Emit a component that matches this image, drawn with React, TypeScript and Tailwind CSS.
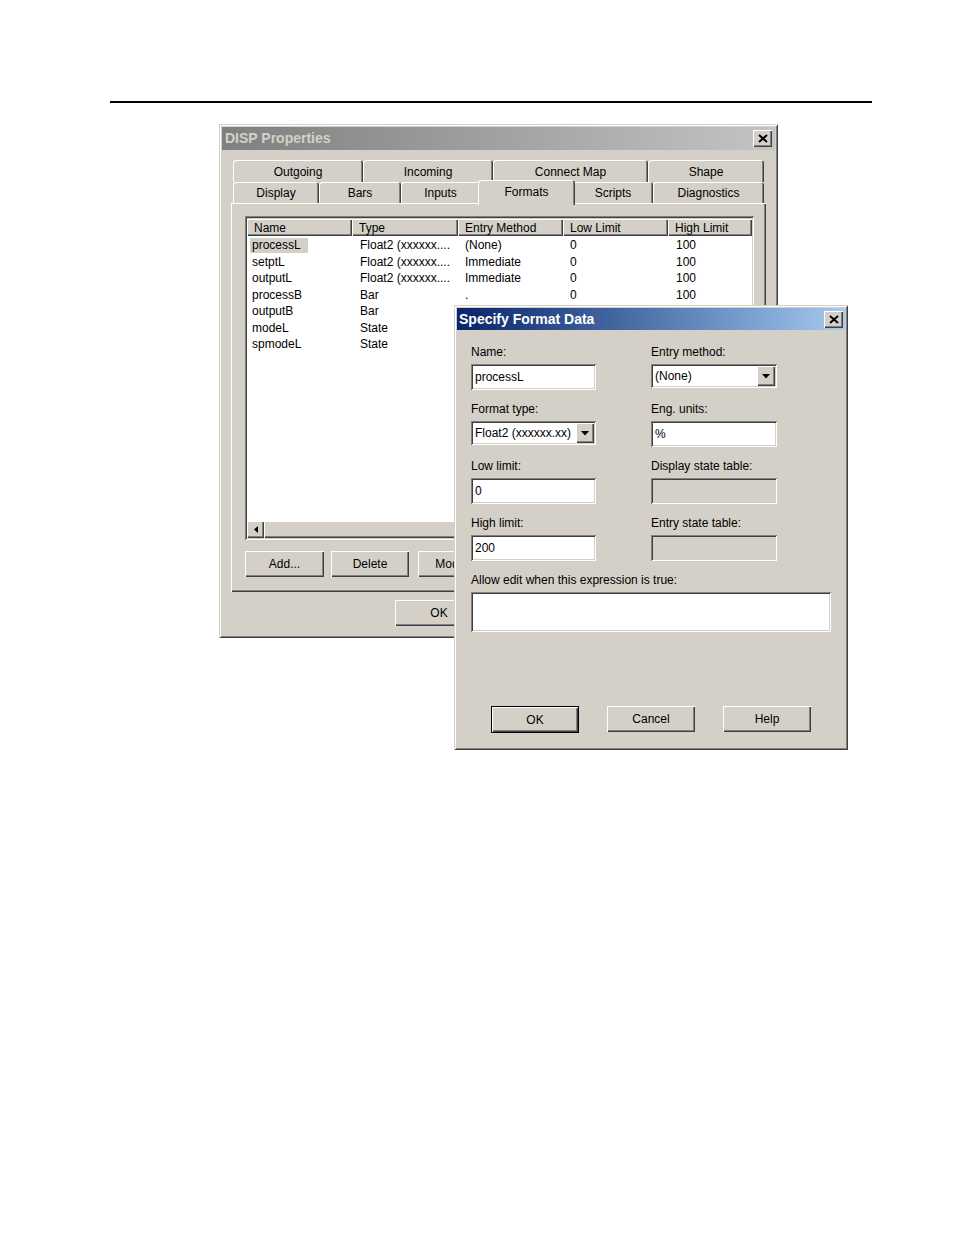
import React from 'react';

// 3D borders, Windows 2000 style
const raised =
  'shadow-[inset_1px_1px_0_#ffffff,inset_-1px_-1px_0_#404040,inset_-2px_-2px_0_#808080]';
const frame =
  'shadow-[inset_1px_1px_0_#d4d0c8,inset_-1px_-1px_0_#404040,inset_2px_2px_0_#ffffff,inset_-2px_-2px_0_#808080]';
const sunken =
  'shadow-[inset_1px_1px_0_#808080,inset_-1px_-1px_0_#ffffff,inset_2px_2px_0_#404040,inset_-2px_-2px_0_#d4d0c8]';
const tabEdge = 'shadow-[inset_1px_1px_0_#ffffff,inset_-1px_0_0_#404040,inset_-2px_0_0_#808080]';

type Tab = { label: string; w: string; selected?: boolean };

const tabsTop: Tab[] = [
  { label: 'Outgoing', w: 'w-[130px]' },
  { label: 'Incoming', w: 'w-[130px]' },
  { label: 'Connect Map', w: 'w-[155px]' },
  { label: 'Shape', w: 'w-[116px]' },
];

const tabsBottom: Tab[] = [
  { label: 'Display', w: 'w-[86px]' },
  { label: 'Bars', w: 'w-[82px]' },
  { label: 'Inputs', w: 'w-[79px]' },
  { label: 'Formats', w: 'w-[97px]', selected: true },
  { label: 'Scripts', w: 'w-[80px]' },
  { label: 'Diagnostics', w: 'w-[111px]' },
];

const columnas = [
  { titulo: 'Name', w: 'w-[105px]' },
  { titulo: 'Type', w: 'w-[106px]' },
  { titulo: 'Entry Method', w: 'w-[105px]' },
  { titulo: 'Low Limit', w: 'w-[105px]' },
  { titulo: 'High Limit', w: 'flex-1' },
];

// las filas de abajo quedan tapadas por el diálogo delantero
const filas = [
  ['processL', 'Float2 (xxxxxx....', '(None)', '0', '100'],
  ['setptL', 'Float2 (xxxxxx....', 'Immediate', '0', '100'],
  ['outputL', 'Float2 (xxxxxx....', 'Immediate', '0', '100'],
  ['processB', 'Bar', '.', '0', '100'],
  ['outputB', 'Bar', '', '', ''],
  ['modeL', 'State', '', '', ''],
  ['spmodeL', 'State', '', '', ''],
];

function CloseButton() {
  return (
    <div className={`w-[19px] h-[17px] bg-[#d4d0c8] flex items-center justify-center ${raised}`}>
      <svg width="10" height="9" viewBox="0 0 10 9">
        <path d="M1 1 L9 8 M9 1 L1 8" stroke="#000" strokeWidth="1.9" fill="none" />
      </svg>
    </div>
  );
}

function Button({ label, w, def }: { label: string; w: string; def?: boolean }) {
  if (def) {
    return (
      <div className={`${w} h-[27px] border border-black bg-[#d4d0c8]`}>
        <div className={`h-full flex items-center justify-center ${raised}`}>{label}</div>
      </div>
    );
  }
  return (
    <div className={`${w} h-[26px] bg-[#d4d0c8] flex items-center justify-center whitespace-nowrap overflow-hidden ${raised}`}>
      {label}
    </div>
  );
}

function DropArrow() {
  return (
    <div className={`absolute right-[2px] top-[2px] bottom-[2px] w-[18px] bg-[#d4d0c8] flex items-center justify-center ${raised}`}>
      <svg width="8" height="5" viewBox="0 0 8 5">
        <path d="M0 0 H8 L4 4.5 Z" fill="#000" />
      </svg>
    </div>
  );
}

function BackWindow() {
  return (
    <div className={`absolute left-[1px] top-0 w-[559px] h-[514px] bg-[#d4d0c8] p-[3px] flex flex-col ${frame}`}>
      {/* barra de título inactiva */}
      <div className="h-[23px] bg-linear-to-r from-[#808080] to-[#c4c4c4] flex items-center justify-between pl-[3px] pr-[3px]">
        <span className="font-bold text-[14px] text-[#d4d0c8]">DISP Properties</span>
        <CloseButton />
      </div>

      {/* pestañas */}
      <div className="mt-[10px] ml-[11px] flex h-[22px]">
        {tabsTop.map((t) => (
          <div key={t.label} className={`${t.w} h-[22px] pt-[2px] rounded-t-[3px] bg-[#d4d0c8] flex items-center justify-center ${tabEdge}`}>
            {t.label}
          </div>
        ))}
      </div>
      <div className="ml-[11px] flex items-end h-[21px]">
        {tabsBottom.map((t) =>
          t.selected ? (
            <div
              key={t.label}
              className={`${t.w} -mx-[2px] h-[25px] -mb-[2px] relative z-10 rounded-t-[3px] bg-[#d4d0c8] flex justify-center pt-[5px] leading-[14px] shadow-[inset_1px_1px_0_#ffffff,inset_-1px_0_0_#404040,inset_-2px_0_0_#808080]`}
            >
              {t.label}
            </div>
          ) : (
            <div key={t.label} className={`${t.w} h-[21px] pt-[1px] rounded-t-[3px] bg-[#d4d0c8] flex items-center justify-center ${tabEdge}`}>
              {t.label}
            </div>
          )
        )}
      </div>

      {/* panel */}
      <div className={`ml-[9px] w-[535px] h-[389px] pl-[14px] pt-[13px] ${raised}`}>
        <div className={`w-[509px] h-[324px] bg-white p-[2px] flex flex-col ${sunken}`}>
          <div className="h-[18px] pt-[1px] flex bg-[#d4d0c8]">
            {columnas.map((c) => (
              <div key={c.titulo} className={`${c.w} h-full pl-[7px] flex items-center whitespace-nowrap ${raised}`}>
                {c.titulo}
              </div>
            ))}
          </div>
          <div className="flex-1 pt-[1px] overflow-hidden">
            {filas.map((f, i) => (
              <div key={f[0]} className="h-[16.5px] flex items-center whitespace-nowrap">
                <div className="w-[105px] pl-[3px]">
                  <span className={`inline-block px-[2px] leading-[15px] w-[58px] ${i === 0 ? 'bg-[#d4d0c8]' : ''}`}>{f[0]}</span>
                </div>
                <div className="w-[106px] pl-[8px] overflow-hidden">{f[1]}</div>
                <div className="w-[105px] pl-[7px]">{f[2]}</div>
                <div className="w-[105px] pl-[7px]">{f[3]}</div>
                <div className="flex-1 pl-[8px]">{f[4]}</div>
              </div>
            ))}
          </div>
          {/* barra de desplazamiento */}
          <div className="h-[17px] flex bg-[#e8e6e2]">
            <div className={`w-[17px] h-full bg-[#d4d0c8] flex items-center justify-center ${raised}`}>
              <svg width="4" height="7" viewBox="0 0 4 7">
                <path d="M4 0 V7 L0 3.5 Z" fill="#000" />
              </svg>
            </div>
            <div className={`flex-1 h-full bg-[#d4d0c8] ${raised}`} />
          </div>
        </div>

        <div className="mt-[11px] flex">
          <Button label="Add..." w="w-[79px]" />
          <div className="ml-[7px]">
            <Button label="Delete" w="w-[78px]" />
          </div>
          <div className="ml-[9px]">
            <Button label="Modify..." w="w-[79px]" />
          </div>
        </div>
      </div>

      <div className="mt-[8px] ml-[173px]">
        <Button label="OK" w="w-[88px]" />
      </div>
    </div>
  );
}

function Field({ label, value, disabled }: { label: string; value?: string; disabled?: boolean }) {
  return (
    <div className="flex flex-col">
      <div className="h-[14px] leading-[14px] whitespace-nowrap">{label}</div>
      <div className={`mt-[5px] h-[26px] ${disabled ? 'bg-[#d4d0c8]' : 'bg-white'} pl-[4px] flex items-center ${sunken}`}>
        {value}
      </div>
    </div>
  );
}

function SelectField({ label, value }: { label: string; value: string }) {
  return (
    <div className="flex flex-col">
      <div className="h-[14px] leading-[14px] whitespace-nowrap">{label}</div>
      <div className="mt-[5px] h-[26px]">
        <div className={`relative h-[24px] bg-white pl-[4px] flex items-center whitespace-nowrap ${sunken}`}>
          {value}
          <DropArrow />
        </div>
      </div>
    </div>
  );
}

function FrontWindow() {
  return (
    <div className={`absolute left-[236px] top-[181px] w-[394px] h-[445px] bg-[#d4d0c8] p-[3px] flex flex-col z-20 ${frame}`}>
      <div className="h-[22px] bg-linear-to-r from-[#0a246a] to-[#a6caf0] flex items-center justify-between pl-[2px] pr-[2px]">
        <span className="font-bold text-[14px] text-white">Specify Format Data</span>
        <CloseButton />
      </div>

      <div className="pl-[14px] pt-[15px]">
        <div className="grid grid-cols-[125px_126px] gap-x-[55px] gap-y-[12px]">
          <Field label="Name:" value="processL" />
          <SelectField label="Entry method:" value="(None)" />
          <SelectField label="Format type:" value="Float2 (xxxxxx.xx)" />
          <Field label="Eng. units:" value="%" />
          <Field label="Low limit:" value="0" />
          <Field label="Display state table:" disabled />
          <Field label="High limit:" value="200" />
          <Field label="Entry state table:" disabled />
        </div>

        <div className="mt-[12px] h-[14px] leading-[14px]">Allow edit when this expression is true:</div>
        <div className={`mt-[5px] w-[360px] h-[40px] bg-white ${sunken}`} />

        <div className="mt-[74px] ml-[20px] flex gap-[28px]">
          <Button label="OK" w="w-[88px]" def />
          <Button label="Cancel" w="w-[88px]" />
          <Button label="Help" w="w-[88px]" />
        </div>
      </div>
    </div>
  );
}

export default function App() {
  return (
    <div className="w-[954px] h-[1235px] bg-white text-[12px] text-black font-['Liberation_Sans',Arial,sans-serif]">
      <div className="pt-[101px] pl-[110px] pr-[82px]">
        <div className="h-[2px] bg-black" />
      </div>
      <div className="relative ml-[218px] mt-[21px] w-[631px] h-[627px]">
        <BackWindow />
        <FrontWindow />
      </div>
    </div>
  );
}
